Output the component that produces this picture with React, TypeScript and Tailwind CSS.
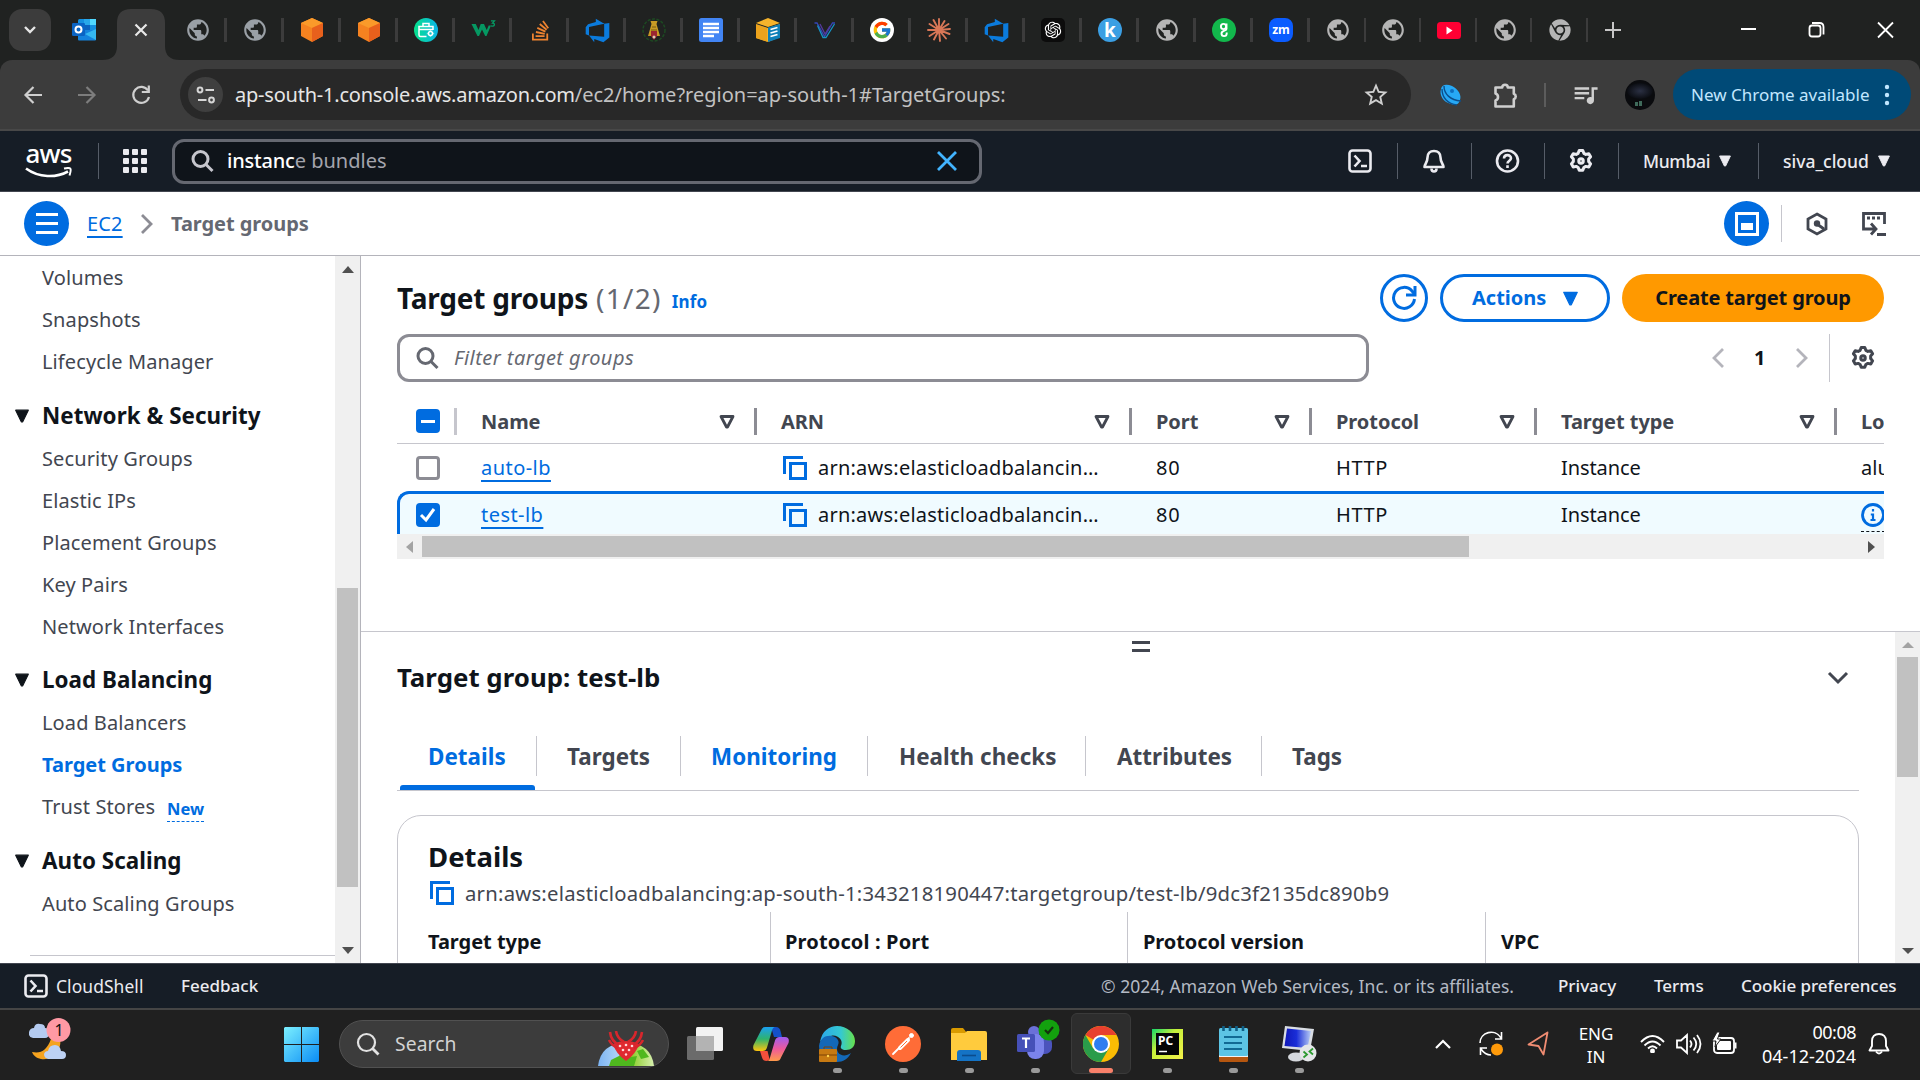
import type { ReactNode } from "react";
import { MdPublic, MdStarOutline, MdOutlineExtension, MdQueueMusic } from "react-icons/md";
import { FaStackOverflow, FaChrome } from "react-icons/fa";
import { FcGoogle } from "react-icons/fc";
import { VscAzureDevops } from "react-icons/vsc";
import { RiOpenaiFill } from "react-icons/ri";

/* ---------- browser tab icons ---------- */
const Globe = ({ light }: { light?: boolean }) => (
  <MdPublic size={26} className={light ? "text-[#b5b5b5]" : "text-[#9aa0a6]"} />
);
const Cube = () => (
  <svg width="22" height="24" viewBox="0 0 22 24">
    <path d="M11 0 22 5v13l-11 6L0 18V5z" fill="#f58220" />
    <path d="M11 0 22 5l-11 5L0 5z" fill="#fa9a2a" />
    <path d="M22 5v13l-11 6V10z" fill="#e8601c" />
  </svg>
);
const Toolkit = () => (
  <svg width="24" height="24" viewBox="0 0 24 24">
    <defs>
      <linearGradient id="tk" x1="0" x2="1">
        <stop offset="0" stopColor="#06e08c" />
        <stop offset="1" stopColor="#0bb5e8" />
      </linearGradient>
    </defs>
    <circle cx="12" cy="12" r="12" fill="url(#tk)" />
    <g fill="none" stroke="#fff" strokeWidth="1.500">
      <path d="M12.500 18.500h-6a1.500 1.500 0 0 1-1.500-1.500V8.500h14V12M5 11.500h14M9 8.500V5.500h6v3" />
      <circle cx="16.500" cy="15.500" r="2" />
      <path d="M16.500 12.500v-.5M16.500 19v-.5M13.500 15.500h-.6M20.100 15.500h-.6" />
    </g>
  </svg>
);
const W3 = () => (
  <svg width="25" height="24" viewBox="0 0 25 24">
    <path d="M.5 6h4.300l2.700 6 2.200-6h3.300l2.700 6 2-4.500h2.300L15.500 18h-1.300L11 11.500 8 18H6.500z" fill="#059862" />
    <path d="M20 2.800h3.500l-2 2.400c3 0 2.500 3.800-1.500 2.600" fill="none" stroke="#059862" strokeWidth="1.300" />
  </svg>
);
const Temple = () => (
  <svg width="24" height="24" viewBox="0 0 24 24">
    <circle cx="12" cy="12" r="11" fill="none" stroke="#1d4a22" strokeWidth="1.500" strokeDasharray="3 1.500" />
    <path d="M8.500 3h7l-1 3 3.500 12H6L9.500 6z" fill="#c99a25" />
    <path d="M10 9h4M9 12h6" stroke="#7a5c10" />
    <path d="M9 13h6v5l-3 4-3-4z" fill="#9c2530" />
    <circle cx="12" cy="19" r="1.500" fill="#d9c9b0" />
  </svg>
);
const Docs = () => (
  <svg width="24" height="24" viewBox="0 0 24 24">
    <rect width="24" height="24" rx="2.500" fill="#4285f4" />
    <path d="M4 6h16M4 10h16M4 14h16M4 18h11" stroke="#fff" strokeWidth="2.400" />
  </svg>
);
const Catalog = () => (
  <svg width="24" height="24" viewBox="0 0 24 24">
    <path d="M0 5 12 0l12 5v14l-12 5L0 20z" fill="#f6b42c" />
    <path d="M0 6l11 4v13.500L0 20z" fill="#eda31c" />
    <path d="M0 5.500l12 4 12-4" fill="none" stroke="#202221" />
    <path d="M12 9.500 24 6v14l-12 4z" fill="#0d7fb8" />
    <path d="M14.500 11.500l7-2M14.500 15l7-2M14.500 18.500l7-2" stroke="#fff" strokeWidth="1.800" />
  </svg>
);
const Vee = () => (
  <svg width="24" height="24" viewBox="0 0 24 24" fill="none" strokeWidth="1.300">
    <path d="M1.500 5H4l7.500 13.500L19.500 5h2.500" stroke="#3446b8" />
    <path d="M4.500 7.500 10 19.500h3L21.500 6" stroke="#1693c4" />
    <path d="M7 6l5 10 5-8" stroke="#55399c" />
  </svg>
);
const GoogleG = () => (
  <span className="flex size-[24px] items-center justify-center rounded-full bg-white">
    <FcGoogle size={20} />
  </span>
);
const Burst = () => (
  <svg width="24" height="24" viewBox="-12 -12 24 24" stroke="#d97757" strokeWidth="1.900" strokeLinecap="round">
    <path d="M0 0V-11M0 0 5.500-9M0 0 9.500-6M0 0 11-1M0 0 10.500 4M0 0 7 8.500M0 0 1 11M0 0-5 9.500M0 0-9.500 6M0 0-11 0M0 0-9.500-6M0 0-5.500-10" />
  </svg>
);
const Gpt = () => (
  <span className="flex size-[24px] items-center justify-center rounded-[5px] bg-[#0c0c0c]">
    <RiOpenaiFill size={20} className="text-white" />
  </span>
);
const Kay = () => (
  <span className="flex size-[24px] items-center justify-center rounded-full bg-[#3b9fe3] text-[19px] leading-[22px] font-bold text-white">k</span>
);
const Green = () => (
  <svg width="24" height="24" viewBox="0 0 24 24">
    <circle cx="12" cy="12" r="12" fill="#12b84c" />
    <g fill="none" stroke="#fff" strokeWidth="1.900">
      <circle cx="11.500" cy="8.500" r="2.600" />
      <path d="M14.500 5.500v5.500c0 2-5 1.500-5 4.500a2.600 2.600 0 0 0 5.200 0v-1" />
    </g>
  </svg>
);
const Zoom = () => (
  <span className="flex size-[24px] items-center justify-center rounded-[8px] bg-[#0b5cff] text-[12px] leading-none font-bold text-white">zm</span>
);
const YouTube = () => (
  <svg width="24" height="17" viewBox="0 0 24 17">
    <rect width="24" height="17" rx="3.500" fill="#f03" />
    <path d="M9.500 4.500v8l6-4z" fill="#fff" />
  </svg>
);
const Outlook = () => (
  <svg width="25" height="24" viewBox="0 0 25 24">
    <rect x="6" y="1" width="18" height="13" rx="1.500" fill="#1490df" />
    <rect x="12" y="1" width="6" height="6" fill="#28a8ea" />
    <rect x="18" y="1" width="6" height="6" fill="#50d9ff" />
    <rect x="12" y="7" width="6" height="6" fill="#0a63c0" />
    <path d="M6 12h18v9.500a1 1 0 0 1-1 1H7a1 1 0 0 1-1-1z" fill="#1483dd" />
    <path d="M24 11v11L13 16z" fill="#35b8f1" />
    <rect x="0" y="5" width="13" height="13" rx="1.200" fill="#0a64c4" />
    <circle cx="6.500" cy="11.500" r="3" fill="none" stroke="#fff" strokeWidth="2" />
  </svg>
);
const Devops = () => <VscAzureDevops size={27} className="text-[#0b7bdc]" />;

const wideTabs: ReactNode[] = [
  <Globe />, <Globe />, <Cube />, <Cube />, <Toolkit />, <W3 />,
  <FaStackOverflow size={23} className="text-[#ee8330]" />,
  <Devops />, <Temple />, <Docs />, <Catalog />, <Vee />, <GoogleG />, <Burst />, <Devops />, <Gpt />, <Kay />,
  <Globe light />, <Green />, <Zoom />,
];
const slimTabs: ReactNode[] = [
  <Globe light />, <Globe light />, <YouTube />, <Globe light />,
  <FaChrome size={22} className="text-[#b5b5b5]" />,
];

function TabStrip() {
  return (
    <div className="flex h-[60px] bg-[#202221]">
      <div className="mt-[9px] ml-[9px] flex size-[42px] items-center justify-center rounded-[13px] bg-[#3c3c3c]">
        <svg width="14" height="10" viewBox="0 0 14 10"><path d="M2 2l5 5 5-5" fill="none" stroke="#e6e6e6" strokeWidth="2.400" /></svg>
      </div>
      <div className="ml-[21px] flex w-[25px] items-center"><Outlook /></div>
      <svg className="ml-[5px]" width="80" height="60" viewBox="0 0 80 60">
        <path d="M0 60Q15 60 15 46V23Q15 9 29 9H49Q63 9 63 23V46Q63 60 78 60z" fill="#3c3c3c" />
        <path d="M33.500 24.500l11 11m0-11l-11 11" stroke="#e8e8e8" strokeWidth="2.200" />
      </svg>
      <div className="-ml-[12px] flex">
        {wideTabs.map((icon, i) => (
          <div key={i} className="flex w-[57px] items-center">
            <div className="flex flex-1 justify-center pl-[2px]">{icon}</div>
            <div className="h-[24px] w-[3px] bg-[#3c3c3c]" />
          </div>
        ))}
        {slimTabs.map((icon, i) => (
          <div key={i} className="flex w-[55.6px] items-center">
            <div className="flex flex-1 justify-center pl-[2px]">{icon}</div>
            <div className="h-[24px] w-[2px] bg-[#3c3c3c]" />
          </div>
        ))}
      </div>
      <svg className="ml-[15px]" width="20" height="60" viewBox="0 0 20 60"><path d="M2 30h16M10 22v16" stroke="#c7c7c7" strokeWidth="2" /></svg>
      <svg className="mr-[1px] ml-auto" width="190" height="60" viewBox="0 0 190 60" fill="none" stroke="#fff" strokeWidth="1.800">
        <path d="M12 29h15M149 22.500l15 15m0-15l-15 15" />
        <rect x="80.500" y="25.500" width="11" height="11" rx="2.500" />
        <path d="M83 23h7.500q4 0 4 4v7.500" />
      </svg>
    </div>
  );
}

function Toolbar() {
  return (
    <div className="h-[71px] bg-[#202221]">
      <div className="flex h-[71px] items-center rounded-t-[12px] border-b-2 border-[#484848] bg-[#3c3c3c]">
        <svg className="ml-[23px] shrink-0" width="140" height="24" viewBox="0 0 140 24" fill="none" strokeWidth="2.200">
          <path d="M19 12H3M10.500 4l-8 8 8 8" stroke="#cfcfcf" />
          <path d="M55 12h16M63.500 4l8 8-8 8" stroke="#7d7d7d" />
          <path d="M125 7.500A8 8 0 1 0 126 14" stroke="#cfcfcf" />
          <path d="M125.800 2.500v6.500h-7" stroke="#cfcfcf" />
        </svg>
        <div className="ml-[17px] flex h-[51px] w-[1231px] items-center rounded-full bg-[#282828]">
          <div className="ml-[8px] flex size-[35px] items-center justify-center rounded-full bg-[#3f3f3f]">
            <svg width="20" height="18" viewBox="0 0 20 18" fill="none" stroke="#d6d6d6" strokeWidth="2">
              <circle cx="4" cy="4" r="2.400" /><path d="M9.500 4H18M2 14h8.500" /><circle cx="15.500" cy="14" r="2.400" />
            </svg>
          </div>
          <div className="ml-[12px] text-[20px] leading-[40px] whitespace-nowrap">
            <span className="tracking-[-0.220px] text-[#e6e6e6]">ap-south-1.console.aws.amazon.com</span>
            <span className="text-[#c2c2c2]">/ec2/home?region=ap-south-1#TargetGroups:</span>
          </div>
          <MdStarOutline size={28} className="mr-[21px] ml-auto text-[#cfcfcf]" />
        </div>
        <svg className="ml-[28px]" width="24" height="24" viewBox="0 0 24 24">
          <path d="M2 6C3 1 8 1 13 3c6 3 10 9 8 14-1 4-4 6-9 4C4 19 0 12 2 6z" fill="#27a9f5" />
          <path d="M5 3c0 8 6 14 17 15M3 6c0 9 6 15 15 16" fill="none" stroke="#0b4f8c" strokeWidth="1.400" />
          <circle cx="13" cy="8" r="2" fill="#0d6fc0" />
        </svg>
        <svg className="ml-[29px]" width="28" height="28" viewBox="0 0 28 28">
          <path d="M3.500 6.500h6.700a2.800 2.800 0 0 1 5.600 0h6v6.200a3 3 0 0 1 0 5.600v7.200H3.500v-6a3.700 3.700 0 0 0 0-7z" fill="none" stroke="#cfcfcf" strokeWidth="2.600" strokeLinejoin="round" />
        </svg>
        <div className="ml-[24px] h-[24px] w-[2px] bg-[#5c5c5c]" />
        <MdQueueMusic size={29} className="ml-[25px] text-[#cfcfcf]" />
        <svg className="ml-[25px]" width="30" height="30" viewBox="0 0 30 30">
          <defs><radialGradient id="av"><stop offset="0" stopColor="#2b3043" /><stop offset="1" stopColor="#0b0d12" /></radialGradient></defs>
          <circle cx="15" cy="15" r="15" fill="#0a0b0e" />
          <ellipse cx="15" cy="11" rx="13" ry="8" fill="url(#av)" />
          <path d="M10 22h3v4h-3zM14 21h3v5h-3z" fill="#3f6a5a" />
        </svg>
        <div className="ml-[18px] flex h-[51px] w-[238px] items-center rounded-full bg-[#004a77] text-[#c2e7ff]">
          <span className="ml-[18px] w-[178px] text-[17px] whitespace-nowrap">New Chrome available</span>
          <svg className="ml-[15px]" width="6" height="22" viewBox="0 0 6 22" fill="#c2e7ff"><circle cx="3" cy="3" r="2.200" /><circle cx="3" cy="11" r="2.200" /><circle cx="3" cy="19" r="2.200" /></svg>
        </div>
      </div>
    </div>
  );
}

/* ---------- console icons ---------- */
const SearchIcon = ({ className }: { className: string }) => (
  <svg className={className} width="24" height="24" viewBox="0 0 24 24" fill="none" stroke="currentColor" strokeWidth="3">
    <circle cx="9.500" cy="10" r="7.500" /><path d="M15 15.500 21.500 22" />
  </svg>
);
const ShellIcon = ({ className }: { className: string }) => (
  <svg className={className} width="24" height="24" viewBox="0 0 24 24" fill="none" stroke="currentColor" strokeWidth="2.600">
    <rect x="1.500" y="1.500" width="21" height="21" rx="3" /><path d="M6.500 6.500l5 5.500-5 5.500M13 17h6" />
  </svg>
);
const GearIcon = ({ className }: { className: string }) => (
  <svg className={className} width="24" height="24" viewBox="0 0 16 16" fill="none" stroke="currentColor" strokeWidth="2" strokeLinejoin="round">
    <path d="M6.800 1h2.400l.7 1.900 1.300.7 2-.5 1.200 2.100-1.300 1.500v1.600l1.300 1.600-1.200 2.100-2-.4-1.300.7-.7 1.800H6.800l-.7-1.800-1.300-.7-2 .4-1.200-2.100 1.300-1.600V6.700L1.600 5.200l1.200-2.100 2 .5 1.300-.7z" />
    <circle cx="8" cy="8" r="1.500" />
  </svg>
);
const CopyIcon = ({ className }: { className?: string }) => (
  <svg className={className} width="24" height="24" viewBox="0 0 24 24" fill="none" stroke="#006ce0" strokeWidth="3">
    <path d="M1.500 18V1.500H20" /><rect x="7.500" y="7.500" width="15" height="15" />
  </svg>
);
const Caret = ({ className, size }: { className: string; size: number }) => (
  <svg className={className} width={size} height={size} viewBox="0 0 12 12"><path d="M.6 1h10.800L6.600 11H5.400z" fill="currentColor" stroke="currentColor" strokeLinejoin="round" /></svg>
);

function AwsHeader() {
  const rule = "h-[36px] w-[1px] bg-[#565d68] shrink-0";
  return (
    <header className="flex h-[61px] items-center border-b border-[#424650] bg-[#161d26] text-[#ebebf0]">
      <div className="ml-[24px] flex w-[49px] flex-col items-center">
        <span className="h-[22px] text-[26px] leading-[17px] font-medium tracking-[-0.8px] text-white">aws</span>
        <svg width="48" height="11" viewBox="0 0 48 11" fill="none" stroke="#fff"><path d="M1 1.500C14 11 31 11 43 4.500" strokeWidth="2.600" /><path d="M39 1.500c7-1.500 8-.5 5.500 7" strokeWidth="2" /></svg>
      </div>
      <div className={`${rule} ml-[25px]`} />
      <div className="ml-[24px] grid grid-cols-3 gap-[3px]">
        {Array.from({ length: 9 }, (_, i) => <span key={i} className="size-[6px] rounded-[1px] bg-[#ebebf0]" />)}
      </div>
      <div className="ml-[25px] flex h-[45px] w-[810px] items-center rounded-[12px] border-3 border-[#656871] bg-[#0f141a]">
        <SearchIcon className="ml-[16px] text-[#c6c6cd]" />
        <div className="ml-[12px] text-[20px] whitespace-nowrap text-white">
          <span className="font-medium tracking-[-0.200px]">instanc</span><span className="text-[#a4a4ad]">e bundles</span>
        </div>
        <svg className="mr-[21px] ml-auto" width="22" height="22" viewBox="0 0 22 22"><path d="M2 2l18 18M20 2 2 20" stroke="#42b4ff" strokeWidth="2.800" /></svg>
      </div>
      <ShellIcon className="ml-[366px]" />
      <div className={`${rule} ml-[25px]`} />
      <svg className="ml-[24px]" width="24" height="24" viewBox="0 0 24 24" fill="none" stroke="currentColor" strokeWidth="2.600">
        <path d="M12 2c-4 0-6.500 2.500-6.500 6.500C5.500 14 2.500 15 2.500 18h19c0-3-3-4-3-9.500C18.500 4.500 16 2 12 2z" strokeLinejoin="round" /><path d="M9.500 19.500c0 4 5 4 5 0" />
      </svg>
      <div className={`${rule} ml-[25px]`} />
      <svg className="ml-[23px]" width="25" height="24" viewBox="0 0 24 24" fill="none" stroke="currentColor" strokeWidth="2.600">
        <circle cx="12" cy="12" r="10.500" /><path d="M8.500 9.500c0-4.500 7-4.500 7-.2 0 2.500-3.500 2.400-3.500 5.200M12 16.300v2.600" />
      </svg>
      <div className={`${rule} ml-[24px]`} />
      <GearIcon className="ml-[24px]" />
      <div className={`${rule} ml-[25px]`} />
      <span className="ml-[24px] w-[67px] text-[17.500px] font-medium tracking-[-0.350px] whitespace-nowrap">Mumbai</span>
      <Caret className="ml-[9px]" size={12} />
      <div className={`${rule} ml-[27px]`} />
      <span className="ml-[24px] w-[86px] text-[17.500px] font-medium whitespace-nowrap">siva_cloud</span>
      <Caret className="ml-[9px]" size={12} />
    </header>
  );
}

function Breadcrumbs() {
  return (
    <div className="flex h-[64px] items-center border-b border-[#b4b4bb] bg-white">
      <div className="ml-[24px] flex size-[45px] flex-col items-center justify-center gap-[6px] rounded-full bg-[#006ce0]">
        <span className="h-[3px] w-[22px] bg-white" /><span className="h-[3px] w-[22px] bg-white" /><span className="h-[3px] w-[22px] bg-white" />
      </div>
      <span className="ml-[18px] w-[36px] text-[20px] tracking-[0.150px] text-[#006ce0] underline decoration-2 underline-offset-[5px]">EC2</span>
      <svg className="ml-[17px]" width="14" height="22" viewBox="0 0 14 22"><path d="M2 2l9 9-9 9" fill="none" stroke="#8c8c94" strokeWidth="2.800" /></svg>
      <span className="ml-[17px] text-[20px] font-bold tracking-[-0.060px] text-[#656871]">Target groups</span>
      <div className="ml-auto flex size-[45px] items-center justify-center rounded-full bg-[#006ce0]">
        <svg width="24" height="24" viewBox="0 0 24 24"><rect x="1.500" y="1.500" width="21" height="21" fill="none" stroke="#fff" strokeWidth="3" /><path d="M6 11h12v7H6z" fill="#fff" /></svg>
      </div>
      <div className="ml-[12px] h-[37px] w-[1px] bg-[#c6c6cd]" />
      <svg className="ml-[23px]" width="24" height="24" viewBox="0 0 24 24" fill="none" stroke="#424650" strokeWidth="2.800">
        <path d="M12 2l9 5v10l-9 5-9-5V7z" /><circle cx="12" cy="11.500" r="3.200" fill="#424650" stroke="none" /><path d="M12 12l7 5" />
      </svg>
      <svg className="mr-[34px] ml-[33px]" width="24" height="24" viewBox="0 0 24 24" fill="none" stroke="#424650" strokeWidth="2.800">
        <path d="M22.500 12V1.500H1.500V17H13M9 11.500l5 5.500-5 5.500M15 22.500h9" /><path d="M5 6h14" strokeDasharray="3 2" />
      </svg>
    </div>
  );
}

/* ---------- side navigation ---------- */
function NavItem({ label }: { label: string }) {
  if (label === "Target Groups")
    return <a className="block h-[42px] pl-[42px] text-[20px] leading-[42px] font-bold text-[#006ce0]">{label}</a>;
  return (
    <a className="flex h-[42px] items-center pl-[42px] text-[20px] tracking-[0.110px] whitespace-nowrap text-[#424650]">
      {label}
      {label === "Trust Stores" && (
        <span className="mt-[3px] ml-[12px] border-b border-dashed border-[#006ce0] text-[16.500px] leading-[25px] font-bold tracking-normal text-[#006ce0]">New</span>
      )}
    </a>
  );
}
function NavHeading({ label, className }: { label: string; className: string }) {
  return (
    <div className={`flex items-center pt-[10px] pl-[15px] text-[#0f141a] ${className}`}>
      <Caret className="" size={14} />
      <span className="ml-[13px] text-[22.400px] leading-[40px] font-bold tracking-[0.040px] whitespace-nowrap">{label}</span>
    </div>
  );
}
function SideNav() {
  return (
    <nav className="flex w-[361px] shrink-0 border-r border-[#b4b4bb] bg-white">
      <div className="w-[335px] pt-[1px]">
        {["Volumes", "Snapshots", "Lifecycle Manager"].map((t) => <NavItem key={t} label={t} />)}
        <NavHeading label="Network & Security" className="h-[55px]" />
        {["Security Groups", "Elastic IPs", "Placement Groups", "Key Pairs", "Network Interfaces"].map((t) => <NavItem key={t} label={t} />)}
        <NavHeading label="Load Balancing" className="h-[54px]" />
        {["Load Balancers", "Target Groups", "Trust Stores"].map((t) => <NavItem key={t} label={t} />)}
        <NavHeading label="Auto Scaling" className="h-[55px]" />
        <NavItem label="Auto Scaling Groups" />
        <div className="mt-[30px] ml-[30px] h-px bg-[#c6c6cd]" />
      </div>
      <div className="flex w-[25px] flex-col items-center bg-[#f0f0f0]">
        <svg className="mt-[10px]" width="12" height="7"><path d="M0 7 6 0l6 7z" fill="#505050" /></svg>
        <div className="mt-[315px] h-[299px] w-[21px] bg-[#c1c1c1]" />
        <svg className="mt-auto mb-[9px]" width="12" height="7"><path d="M0 0h12L6 7z" fill="#505050" /></svg>
      </div>
    </nav>
  );
}

/* ---------- table ---------- */
const Divider = ({ soft }: { soft?: boolean }) => (
  <span className={soft ? "h-[27px] w-[3px] bg-[#c6c6cd]" : "h-[27px] w-[3px] bg-[#8c8c94]"} />
);
function HeadCell({ label, className }: { label: string; className: string }) {
  return (
    <div className={`flex shrink-0 items-center ${className}`}>
      <span className="text-[20px] leading-[30px] font-bold tracking-[-0.050px] whitespace-nowrap">{label}</span>
      <svg className="mr-[19px] ml-auto" width="16" height="14" viewBox="0 0 16 14"><path d="M2 1.500h12L8.500 12h-1z" fill="none" stroke="#424650" strokeWidth="2.800" strokeLinejoin="round" /></svg>
      <Divider />
    </div>
  );
}
function RowCells({ name, checked }: { name: string; checked?: boolean }) {
  return (
    <>
      {checked ? (
        <span className="size-[24px] shrink-0 rounded-[4px] bg-[#006ce0]">
          <svg width="24" height="24" viewBox="0 0 24 24"><path d="M5 12l5 5 8-11" fill="none" stroke="#fff" strokeWidth="3" /></svg>
        </span>
      ) : (
        <span className="size-[24px] shrink-0 rounded-[4px] border-3 border-[#8c8c94] bg-white" />
      )}
      <div className="ml-[41px] w-[300px] shrink-0 tracking-[0.450px]">
        <a className="text-[#006ce0] underline decoration-2 underline-offset-[5px]">{name}</a>
      </div>
      <div className="flex w-[375px] shrink-0 items-center pl-[2px]">
        <CopyIcon /><span className="ml-[11px] tracking-[0.230px]">arn:aws:elasticloadbalancin…</span>
      </div>
      <div className="w-[180px] shrink-0 tracking-[0.800px]">80</div>
      <div className="w-[225px] shrink-0 tracking-[0.600px]">HTTP</div>
      <div className="w-[300px] shrink-0 tracking-[-0.100px]">Instance</div>
    </>
  );
}
function TargetTable() {
  return (
    <div className="mt-[18px] overflow-hidden text-[20px] whitespace-nowrap text-[#0f141a]">
      <div className="flex h-[44px] items-center border-b border-[#c6c6cd] text-[#424650]">
        <span className="-mt-[1px] ml-[19px] flex size-[24px] shrink-0 items-center justify-center rounded-[4px] bg-[#006ce0]"><i className="h-[3px] w-[14px] bg-white" /></span>
        <span className="ml-[14px] flex shrink-0"><Divider soft /></span>
        <HeadCell label="Name" className="w-[300px] pl-[24px]" />
        <HeadCell label="ARN" className="w-[375px] pl-[24px]" />
        <HeadCell label="Port" className="w-[180px] pl-[24px]" />
        <HeadCell label="Protocol" className="w-[225px] pl-[24px]" />
        <HeadCell label="Target type" className="w-[300px] pl-[24px]" />
        <span className="ml-[24px] font-bold tracking-[-0.200px]">Lo</span>
      </div>
      <div className="flex h-[47px] items-center pl-[19px]">
        <RowCells name="auto-lb" />
        <span>alu</span>
      </div>
      <div className="h-[43px] overflow-hidden">
        <div className="flex h-[60px] rounded-tl-[12px] border-t-3 border-l-3 border-[#006ce0] bg-[#f0fbff] pl-[16px]">
          <div className="flex h-[41px] items-center">
            <RowCells name="test-lb" checked />
            <span className="mt-[6px] border-b border-dashed border-[#0f141a] pb-[4px]">
              <svg width="24" height="24" viewBox="0 0 24 24" fill="none" stroke="#006ce0" strokeWidth="2.800"><circle cx="12" cy="12" r="10.500" /><path d="M12 10.500V17M12 6v2.500M9.500 17h5M9.800 11.500H12" strokeWidth="2.200" /></svg>
            </span>
          </div>
        </div>
      </div>
      <div className="flex h-[25px] items-center bg-[#f0f0f0]">
        <svg className="ml-[9px]" width="7" height="12"><path d="M7 0v12L0 6z" fill="#a3a3a3" /></svg>
        <div className="ml-[9px] h-[21px] w-[1047px] bg-[#c1c1c1]" />
        <svg className="mr-[9px] ml-auto" width="7" height="12"><path d="M0 0v12l7-6z" fill="#505050" /></svg>
      </div>
    </div>
  );
}

function TargetGroups() {
  return (
    <section className="h-[375px] bg-white px-[36px] pt-[18px]">
      <div className="flex h-[48px] items-center">
        <h1 className="text-[28px] leading-[46px] font-bold tracking-[-0.220px] text-[#0f141a]">Target groups</h1>
        <span className="ml-[8px] text-[28px] leading-[46px] tracking-[1.300px] text-[#656871]">(1/2)</span>
        <span className="mt-[7px] ml-[10px] text-[17px] font-bold tracking-[0.200px] text-[#006ce0]">Info</span>
        <div className="ml-auto flex size-[48px] items-center justify-center rounded-full border-3 border-[#006ce0]">
          <svg width="26" height="26" viewBox="0 0 26 26" fill="none" stroke="#006ce0" strokeWidth="3"><path d="M23.500 14A10.500 10.500 0 1 1 21 6l2.500 3" /><path d="M24 1v9h-9" /></svg>
        </div>
        <div className="ml-[12px] flex h-[48px] w-[170px] items-center rounded-full border-3 border-[#006ce0] text-[#006ce0]">
          <span className="ml-[29px] text-[20px] leading-none font-bold">Actions</span>
          <Caret className="ml-[17px]" size={15} />
        </div>
        <div className="ml-[12px] flex h-[48px] w-[262px] items-center justify-center rounded-full bg-[#ff9900] text-[20px] font-bold tracking-[-0.150px] text-[#0f141a]">Create target group</div>
      </div>
      <div className="mt-[12px] flex h-[48px] items-center">
        <div className="flex h-[48px] w-[972px] items-center rounded-[12px] border-3 border-[#8c8c94]">
          <SearchIcon className="ml-[16px] text-[#656871]" />
          <span className="ml-[14px] text-[20px] tracking-[0.450px] text-[#656871] italic">Filter target groups</span>
        </div>
        <svg className="ml-[342px]" width="14" height="20" viewBox="0 0 14 20"><path d="M12 1 3 10l9 9" fill="none" stroke="#b4b4bb" strokeWidth="2.800" /></svg>
        <span className="ml-[29px] w-[12px] text-[20px] font-bold text-[#0f141a]">1</span>
        <svg className="ml-[29px]" width="14" height="20" viewBox="0 0 14 20"><path d="M2 1l9 9-9 9" fill="none" stroke="#b4b4bb" strokeWidth="2.800" /></svg>
        <div className="ml-[20px] h-[48px] w-px bg-[#c6c6cd]" />
        <GearIcon className="ml-[21px] text-[#424650]" />
      </div>
      <TargetTable />
    </section>
  );
}

/* ---------- split panel ---------- */
const tabs: [string, string][] = [
  ["Details", "w-[140px] pl-[31px] text-[#006ce0]"],
  ["Targets", "w-[144px] pl-[30px] text-[#424650]"],
  ["Monitoring", "w-[187px] pl-[30px] text-[#006ce0]"],
  ["Health checks", "w-[218px] pl-[31px] text-[#424650]"],
  ["Attributes", "w-[176px] pl-[31px] text-[#424650]"],
  ["Tags", "w-[140px] pl-[30px] border-r-0 text-[#424650]"],
];
function DetailPanel() {
  return (
    <section className="flex h-[332px] border-t border-[#c6c6cd] bg-white">
      <div className="w-[1534px] overflow-hidden px-[36px]">
        <div className="mt-[9px] ml-[735px] h-[11px] w-[18px] border-y-3 border-[#424650]" />
        <div className="flex h-[51px] items-center justify-between pr-[10px]">
          <h2 className="text-[25.800px] leading-none font-bold tracking-[0.030px] text-[#0f141a]">Target group: test-lb</h2>
          <svg width="22" height="14" viewBox="0 0 22 14"><path d="M2 2l9 9 9-9" fill="none" stroke="#424650" strokeWidth="3" /></svg>
        </div>
        <div className="mt-[33px] flex h-[40px] text-[22.400px] leading-[42px] font-bold whitespace-nowrap">
          {tabs.map(([t, c]) => (
            <div key={t} className={`shrink-0 border-r border-[#c6c6cd] tracking-[0.050px] ${c}`}>{t}</div>
          ))}
        </div>
        <div className="mt-[9px] border-b border-[#c6c6cd]">
          <div className="ml-[3px] h-[5px] w-[135px] rounded-t-[3px] bg-[#006ce0]" />
        </div>
        <div className="mt-[24px] h-[200px] rounded-t-[24px] border border-[#c6c6cd] pt-[19px] pl-[30px]">
          <h3 className="text-[27.500px] leading-[44px] font-bold text-[#0f141a]">Details</h3>
          <div className="flex h-[28px] items-center pl-[2px]">
            <CopyIcon />
            <span className="ml-[11px] text-[20.300px] leading-[28px] tracking-[0.230px] whitespace-nowrap text-[#424650]">arn:aws:elasticloadbalancing:ap-south-1:343218190447:targetgroup/test-lb/9dc3f2135dc890b9</span>
          </div>
          <div className="mt-[5px] flex h-[90px] text-[20px] leading-[42px] font-bold text-[#0f141a]">
            <div className="w-[342px] pt-[9px] tracking-[-0.030px]">Target type</div>
            <div className="w-[357px] border-l border-[#c6c6cd] pt-[9px] pl-[14px] tracking-[0.150px]">Protocol : Port</div>
            <div className="w-[358px] border-l border-[#c6c6cd] pt-[9px] pl-[15px] tracking-[-0.090px]">Protocol version</div>
            <div className="border-l border-[#c6c6cd] pt-[9px] pl-[15px]">VPC</div>
          </div>
        </div>
      </div>
      <div className="flex w-[25px] flex-col items-center bg-[#f0f0f0]">
        <svg className="mt-[10px]" width="12" height="6"><path d="M0 6 6 0l6 6z" fill="#a3a3a3" /></svg>
        <div className="mt-[9px] h-[120px] w-[21px] bg-[#c1c1c1]" />
        <svg className="mt-auto mb-[9px]" width="12" height="6"><path d="M0 0h12L6 6z" fill="#505050" /></svg>
      </div>
    </section>
  );
}

function Footer() {
  return (
    <footer className="flex h-[47px] items-center border-t border-b-2 border-t-[#424650] border-b-[#454545] bg-[#161d26] text-[17px] whitespace-nowrap text-[#ebebf0]">
      <ShellIcon className="ml-[24px]" />
      <span className="ml-[8px] w-[125px] text-[17.400px] tracking-[0.100px]">CloudShell</span>
      <span className="font-medium">Feedback</span>
      <span className="ml-auto w-[457px] text-[17.500px] tracking-[0.020px] text-[#b4bac4]">© 2024, Amazon Web Services, Inc. or its affiliates.</span>
      <span className="w-[96px] font-medium">Privacy</span>
      <span className="w-[87px] font-medium">Terms</span>
      <span className="mr-[23px] w-[156px] font-medium tracking-[-0.050px]">Cookie preferences</span>
    </footer>
  );
}

/* ---------- taskbar ---------- */
const TaskView = () => (
  <svg width="36" height="34" viewBox="0 0 36 34"><rect y="9" width="27" height="24" rx="1.500" fill="#6b6b6b" /><rect x="9" width="27" height="24" rx="1.500" fill="#f2f2f2" /><path d="M9 9h18v15H9z" fill="#b3b3b3" /></svg>
);
const Copilot = () => (
  <svg width="36" height="34" viewBox="0 0 36 34">
    <defs>
      <linearGradient id="ca" x1="0" y1="0" x2="0" y2="1"><stop offset="0" stopColor="#1aa0f2" /><stop offset=".5" stopColor="#2fb36c" /><stop offset="1" stopColor="#ffc40d" /></linearGradient>
      <linearGradient id="cb" x1="0" y1="0" x2="0" y2="1"><stop offset="0" stopColor="#a05cf0" /><stop offset=".5" stopColor="#ee5a9a" /><stop offset="1" stopColor="#ff9a4a" /></linearGradient>
    </defs>
    <path d="M18 0h5q3.500 0 4.500 4l1.500 6h-8z" fill="#1450c8" />
    <path d="M8 3.500Q9 0 12.500 0H22q-2 0-3 3.500l-5 17q-1 3.500-4.500 3.500H4q-5 0-3.500-6z" fill="url(#ca)" />
    <path d="M28 30.500q-1 3.500-4.500 3.500H14q2 0 3-3.500l5-17q1-3.500 4.500-3.500H32q5 0 3.500 6z" fill="url(#cb)" />
    <path d="M7 24h7.500l2 8q-1 2-3 2-3.500 0-4.500-3.500z" fill="#f2503c" />
  </svg>
);
const Edge = () => (
  <svg width="36" height="36" viewBox="0 0 36 36">
    <defs><linearGradient id="ed"><stop offset="0" stopColor="#2aa7ea" /><stop offset=".6" stopColor="#35c9d0" /><stop offset="1" stopColor="#67e04b" /></linearGradient></defs>
    <path d="M1 16C3 5 10 0 18 0c10 0 18 7 18 15 0 6-4 9-9 9-4 0-6-2-5-4 3-6-4-12-10-10-5 1-9 3-11 6z" fill="url(#ed)" />
    <path d="M0 20C1 12 7 9 13 10c5 1 8 5 6 9-4 8 5 14 13 8-3 6-8 9-14 9C8 36 0 30 0 20z" fill="#1368b8" />
    <rect y="23" width="18" height="13" rx="1" fill="#c77a12" /><path d="M5 23v-2h8v2M0 29h18" stroke="#7a4306" fill="none" /><circle cx="9" cy="30" r="1.200" fill="#ffd34d" />
  </svg>
);
const Postman = () => (
  <svg width="36" height="36" viewBox="0 0 36 36"><circle cx="18" cy="18" r="18" fill="#ff6c37" /><g stroke="#fff" fill="none" strokeLinecap="round"><circle cx="26.500" cy="9.500" r="2" fill="#fff" /><path d="M8 28 24 12" strokeWidth="1.800" /><path d="M15 22l8-8" strokeWidth="4" /></g><path d="M15.500 21.500l6.500-6.500" stroke="#ff6c37" strokeWidth="1" /></svg>
);
const Explorer = () => (
  <svg width="36" height="33" viewBox="0 0 36 33"><path d="M0 2q0-2 2-2h10l4 5v5H0z" fill="#d99a00" /><path d="M0 5h14l2-2h18q2 0 2 2v27H0z" fill="#ffcb3d" /><path d="M6 33V25q0-3 3-3h18q3 0 3 3v8z" fill="#1473c5" /><path d="M11 27.500h14" stroke="#0a4c8c" strokeWidth="1.600" /></svg>
);
const Teams = () => (
  <svg width="44" height="40" viewBox="0 0 44 40"><circle cx="17" cy="13" r="6" fill="#6a70d8" /><rect x="20" y="17" width="15" height="18" rx="7" fill="#4b53bc" /><rect x="10" y="15" width="17" height="25" rx="8" fill="#7b83eb" /><rect y="15" width="18" height="18" rx="1.500" fill="#4650b8" /><path d="M5 19.500h8M9 19.500V29" stroke="#fff" strokeWidth="2.200" /><circle cx="32" cy="11" r="10.500" fill="#13a10e" /><path d="M28 11l3 3 5-6" fill="none" stroke="#15330f" strokeWidth="2.200" /></svg>
);
const Chrome = () => (
  <svg width="36" height="36" viewBox="0 0 36 36">
    <circle cx="18" cy="18" r="18" fill="#fbbc04" />
    <path d="M18 18 2.400 9A18 18 0 0 1 33.600 9H18z" fill="#e8402f" />
    <path d="M2.400 9A18 18 0 0 0 18 36l7.800-13.500L18 18 10.200 22.500z" fill="#2a9c4a" />
    <circle cx="18" cy="18" r="9" fill="#fff" /><circle cx="18" cy="18" r="7" fill="#2f7df0" />
  </svg>
);
const PyCharm = () => (
  <svg width="31" height="30" viewBox="0 0 31 30">
    <defs><linearGradient id="py" x1="0" y1="0" x2="1" y2="1"><stop offset="0" stopColor="#12d66a" /><stop offset=".4" stopColor="#c6f03a" /><stop offset="1" stopColor="#f4f04a" /></linearGradient></defs>
    <rect width="31" height="30" fill="url(#py)" /><rect x="4" y="4" width="23" height="22" fill="#050505" /><path d="M7 22.500h8" stroke="#fff" strokeWidth="1.500" />
    <text x="6" y="15.500" fontSize="12" fontWeight="700" fill="#fff">PC</text>
  </svg>
);
const Notepad = () => (
  <svg width="29" height="36" viewBox="0 0 29 36"><rect y="29" width="29" height="7" rx="1.500" fill="#b5560f" /><rect y="27" width="29" height="4" fill="#f3f3f3" /><rect y="2" width="29" height="28" rx="1.500" fill="#5cc4e4" /><path d="M5 11h18M5 17h18M5 23h18" stroke="#116a94" strokeWidth="2" /><path d="M4.500 0v5M11 0v5M17.500 0v5M24 0v5" stroke="#0f5f86" strokeWidth="2.600" /></svg>
);
const Rdp = () => (
  <svg width="35" height="36" viewBox="0 0 35 36">
    <defs><linearGradient id="rd"><stop offset="0" stopColor="#1018b8" /><stop offset=".45" stopColor="#1a2ed8" /><stop offset="1" stopColor="#b9cdf5" /></linearGradient></defs>
    <ellipse cx="14" cy="31" rx="8" ry="4.500" fill="#d5d8dd" /><path d="M3 0l29 3-4 22L0 22z" fill="#d9dde3" /><path d="M5 2.500 29 5l-3.500 17L2.500 20z" fill="url(#rd)" />
    <circle cx="26" cy="27" r="8.500" fill="#e4e6e8" /><path d="M21.500 25.500l3.500 3-3.500 3M31 22.500l-3.500 3 3.500 3" fill="none" stroke="#2c9a30" strokeWidth="1.800" />
  </svg>
);

const apps: { icon: ReactNode; mark: "none" | "dot" | "active" }[] = [
  { icon: <TaskView />, mark: "none" },
  { icon: <Copilot />, mark: "none" },
  { icon: <Edge />, mark: "dot" },
  { icon: <Postman />, mark: "dot" },
  { icon: <Explorer />, mark: "dot" },
  { icon: <Teams />, mark: "dot" },
  { icon: <Chrome />, mark: "active" },
  { icon: <PyCharm />, mark: "dot" },
  { icon: <Notepad />, mark: "dot" },
  { icon: <Rdp />, mark: "dot" },
];

function Taskbar() {
  return (
    <div className="flex h-[70px] bg-[#202020] text-white">
      <svg className="mt-[7px] ml-[29px]" width="44" height="46" viewBox="0 0 44 46">
        <path d="M30 18c5 12-4 26-18 24-5-1-8-4-9-7 9 2 15-2 19-13z" fill="#f5a31f" />
        <path d="M4 21q-5-1-4-6 1-4 5-4 1-5 6-4 5 0 5 4 4 0 4 5 0 5-4 5z" fill="#b4cbf0" />
        <path d="M19 42q-4-1-4-5 1-3 4-3 1-6 7-6 5 0 6 6 5 0 5 4 0 4-4 4z" fill="#bdd2f4" />
        <circle cx="29.500" cy="13" r="12" fill="#ff99a4" />
        <text x="25.500" y="19" fontSize="16" fill="#111">1</text>
      </svg>
      <svg className="mt-[17px] ml-[211px]" width="35" height="35" viewBox="0 0 35 35">
        <defs><linearGradient id="wn" x1="0" y1="0" x2="1" y2="1"><stop offset="0" stopColor="#7cf0ff" /><stop offset="1" stopColor="#0a8cf5" /></linearGradient></defs>
        <path d="M1 0h16v17H0V1zM18 0h16l1 1v16H18zM0 18h17v17H1l-1-1zM18 18h17v16l-1 1H18z" fill="url(#wn)" />
      </svg>
      <div className="mt-[10px] ml-[20px] flex h-[48px] w-[330px] items-center rounded-full border border-[#515151] bg-[#3c3c3c]">
        <svg className="ml-[16px]" width="24" height="24" viewBox="0 0 24 24" fill="none" stroke="#e2e2e2" strokeWidth="2.200"><circle cx="10.500" cy="10.500" r="8.500" /><path d="M16.500 16.500l6 6" strokeWidth="2.800" /></svg>
        <span className="ml-[15px] pt-[1px] text-[19.300px] tracking-[0.100px] text-[#d3d3d3]">Search</span>
        <svg className="mt-[10px] mr-[13px] ml-auto" width="58" height="36" viewBox="0 0 58 36">
          <defs><linearGradient id="ea"><stop offset="0" stopColor="#7db4f2" /><stop offset=".45" stopColor="#b9dcf8" /><stop offset=".6" stopColor="#8ccf2c" /><stop offset="1" stopColor="#d8f0b0" /></linearGradient></defs>
          <path d="M1 35Q4 12 29 12t28 23z" fill="url(#ea)" />
          <path d="M12 35l2-6 8-4 4-5 8 6 6-1-3 10zM40 20l6-2 6 8-8 2z" fill="#4fb81e" />
          <path d="M16 13q6-3 13-3t13 3q-3 10-13 17Q19 23 16 13z" fill="#e02a30" />
          <path d="M13 1q1 9 9 13M45 1q-1 9-9 13M19 0q1 7 8 11M39 0q-1 7-8 11M12 9q3 6 9 8M46 9q-3 6-9 8" fill="none" stroke="#d8262c" strokeWidth="2.600" />
          <g fill="#ffd9d9"><circle cx="23" cy="15" r="1.300" /><circle cx="29" cy="14" r="1.300" /><circle cx="35" cy="15" r="1.300" /><circle cx="26" cy="19" r="1.300" /><circle cx="32" cy="19" r="1.300" /><circle cx="29" cy="23.500" r="1.200" /></g>
        </svg>
      </div>
      <div className="ml-[3px] flex">
        {apps.map(({ icon, mark }, i) => (
          <div key={i} className="flex w-[66px] justify-center pt-[3px]">
            <div className={mark === "active" ? "flex h-[61px] w-[60px] flex-col items-center rounded-[6px] border border-[#3a3a3a] bg-[#2d2d2d]" : "flex h-[61px] w-[60px] flex-col items-center border border-transparent"}>
              <div className={i === 5 ? "flex h-[54px] items-center pb-[4px] pl-[8px]" : "mt-[3px] flex h-[54px] items-center"}>{icon}</div>
              {mark === "dot" && <i className={i === 5 ? "h-[5px] w-[9px] rounded-full bg-[#9a9a9a]" : "-mt-[3px] h-[5px] w-[9px] rounded-full bg-[#9a9a9a]"} />}
              {mark === "active" && <i className="-mt-[3px] h-[5px] w-[24px] rounded-full bg-[#f8806a]" />}
            </div>
          </div>
        ))}
      </div>
      <div className="ml-auto flex h-[67px] items-center">
        <svg width="18" height="12" viewBox="0 0 18 12"><path d="M2 10l7-7 7 7" fill="none" stroke="#fff" strokeWidth="2.200" /></svg>
        <svg className="ml-[27px]" width="24" height="25" viewBox="0 0 24 25" fill="none" stroke="#fff" strokeWidth="1.600"><path d="M1 12C1 1 16-3 22 7M22.500 1v7H16M1.500 24v-7H8M2 18q4 6 10 6" /><circle cx="18" cy="18.500" r="6" fill="#ff9a0a" stroke="none" /></svg>
        <svg className="ml-[24px]" width="22" height="25" viewBox="0 0 22 25"><path d="M20.500 1.500 1.500 13.500l10 1.500 5 8.500z" fill="none" stroke="#f08c72" strokeWidth="1.800" strokeLinejoin="round" /></svg>
        <div className="ml-[29px] w-[36px] pt-[3px] text-center text-[17px] leading-[23px]">ENG<br />IN</div>
        <svg className="ml-[26px]" width="25" height="18" viewBox="0 0 25 18" fill="none" stroke="#fff" strokeWidth="1.900"><path d="M1 7Q12.500-5 24 7M4.500 10.500q8-8 16 0M8 13.500q4.500-4.500 9 0" /><circle cx="12.500" cy="16" r="1.500" fill="#fff" /></svg>
        <svg className="ml-[11px]" width="26" height="22" viewBox="0 0 26 22" fill="none" stroke="#fff" strokeWidth="1.800"><path d="M1 7.500h4l6-5.500v18l-6-5.500H1zM14 7.500q3 3.500 0 7M17.500 4.500q5.500 6.500 0 13M21 2q7 9 0 18" /></svg>
        <svg className="ml-[10px]" width="26" height="24" viewBox="0 -2 26 24"><rect x="2" y="4" width="20" height="15" rx="3" fill="none" stroke="#fff" strokeWidth="1.800" /><rect x="5" y="7" width="14" height="9" rx="1" fill="#fff" /><path d="M22.500 8.500h2v6h-2z" fill="#fff" /><path d="M5-2 0 7h4l-1 6 6-8H5.500L8-2z" fill="#fff" stroke="#202020" /></svg>
        <div className="ml-[24px] w-[94px] pt-[1px] text-right text-[18px] leading-[24px] whitespace-nowrap"><span className="tracking-[-0.500px]">00:08</span><br />04-12-2024</div>
        <svg className="mr-[30px] ml-[12px]" width="22" height="24" viewBox="0 0 22 24" fill="none" stroke="#fff" strokeWidth="1.900"><path d="M11 2C6.500 2 4 5 4 9v5l-2.500 4.500h19L18 14V9c0-4-2.500-7-7-7z" strokeLinejoin="round" /><path d="M8 19.500q3 4 6 0" /></svg>
      </div>
    </div>
  );
}

export default function App() {
  return (
    <div className="h-[1080px] w-[1920px] overflow-hidden bg-white font-['Noto_Sans',sans-serif]">
      <TabStrip />
      <Toolbar />
      <AwsHeader />
      <Breadcrumbs />
      <div className="flex h-[707px] overflow-hidden">
        <SideNav />
        <main className="w-[1559px]">
          <TargetGroups />
          <DetailPanel />
        </main>
      </div>
      <Footer />
      <Taskbar />
    </div>
  );
}
